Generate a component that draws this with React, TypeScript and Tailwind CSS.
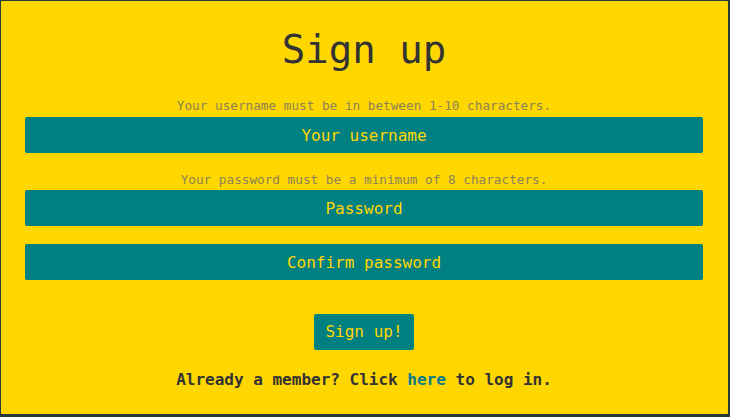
import React from 'react';

const mono = { fontFamily: '"DejaVu Sans Mono", "Liberation Mono", monospace' };

const Hint: React.FC<{ text: string; className?: string }> = ({ text, className }) => (
  <p className={`text-center text-[12.7px] leading-4 text-[#8c8258] ${className ?? ''}`}>{text}</p>
);

const Field: React.FC<{ placeholder: string; type?: string; className?: string }> = ({ placeholder, type = 'text', className }) => (
  <input
    type={type}
    placeholder={placeholder}
    style={mono}
    className={`block w-full h-9 rounded-[2px] bg-[#008080] text-center text-base text-[#ffd700] placeholder:text-[#ffd700] outline-none ${className ?? ''}`}
  />
);

export default function App() {
  return (
    <div className="w-[730px] h-[417px] bg-[#263a3a] pt-px pl-px pr-[2px] pb-[3px] flex" style={mono}>
      <div className="flex-1 bg-[#ffd700] rounded-[1px] pl-6 pr-[25px] pt-[25px] flex flex-col">
        <h1 className="text-center text-[39px] leading-[48px] text-[#333]">Sign up</h1>
        <Hint text="Your username must be in between 1-10 characters." className="mt-6 mb-[3px]" />
        <Field placeholder="Your username" />
        <Hint text="Your password must be a minimum of 8 characters." className="mt-[19px] mb-[2px]" />
        <Field placeholder="Password" type="password" />
        <Field placeholder="Confirm password" type="password" className="mt-[18px]" />
        <div className="flex justify-center mt-[34px]">
          <button style={mono} className="h-9 w-[100px] rounded-[2px] bg-[#008080] text-base text-[#ffd700]">
            Sign up!
          </button>
        </div>
        <p className="mt-[18px] text-center text-base leading-6 font-bold text-[#333]">
          Already a member? Click <a href="#" className="text-[#0b7b8b]">here</a> to log in.
        </p>
      </div>
    </div>
  );
}
